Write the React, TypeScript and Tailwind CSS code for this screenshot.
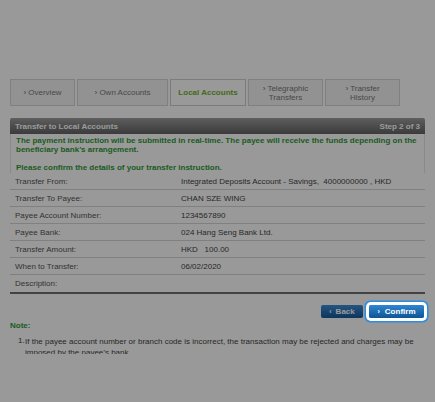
import React from 'react';

const tabs = [
  { label: 'Overview', w: 'w-[65px]' },
  { label: 'Own Accounts', w: 'w-[91px]' },
  { label: 'Local Accounts', w: 'w-[76px]', active: true },
  { label: 'Telegraphic\nTransfers', w: 'w-[75px]' },
  { label: 'Transfer\nHistory', w: 'w-[75px]' },
];

const rows: [string, string][] = [
  ['Transfer From:', 'Integrated Deposits Account - Savings,\u00a0\u00a04000000000\u00a0, HKD'],
  ['Transfer To Payee:', 'CHAN SZE WING'],
  ['Payee Account Number:', '1234567890'],
  ['Payee Bank:', '024 Hang Seng Bank Ltd.'],
  ['Transfer Amount:', 'HKD\u00a0\u00a0\u00a0100.00'],
  ['When to Transfer:', '06/02/2020'],
  ['Description:', ''],
];

export default function App() {
  return (
    <div className="relative h-[402px] w-[435px] overflow-hidden bg-white font-['Liberation_Sans',Arial,sans-serif] text-[8px] leading-[9px]">
      <div className="h-[354px] overflow-hidden px-[10px] pt-[79px]">
        {/* tabs */}
        <div className="flex gap-[2px]">
          {tabs.map((t) => (
            <div
              key={t.label}
              className={`${t.w} flex h-[27px] items-center justify-center border text-center ${t.active ? 'border-[#cfcfcf] bg-white font-bold text-[#74b02c]' : 'border-[#d6d6d6] bg-[#f3f3f3] text-[#7a7a7a]'}`}
            >
              {t.active ? (
                t.label
              ) : (
                <span className="whitespace-pre-line">
                  <span className="text-[#2f77b8]">›</span> {t.label}
                </span>
              )}
            </div>
          ))}
        </div>

        {/* header bar */}
        <div className="mt-[12px] flex h-[16px] items-center justify-between rounded-t-[2px] bg-gradient-to-b from-[#9d9d9d] to-[#636363] px-[5px] font-bold text-white">
          <span>Transfer to Local Accounts</span>
          <span>Step 2 of 3</span>
        </div>

        {/* message */}
        <div className="border-x border-[#e4e4e4] px-[5px] pt-[2px] font-bold text-[#2e9a34]">
          <p>The payment instruction will be submitted in real-time. The payee will receive the funds depending on the beneficiary bank’s arrangement.</p>
          <p className="mt-[9px] h-[10px]">Please confirm the details of your transfer instruction.</p>
        </div>

        {/* details */}
        <div className="border-b-2 border-[#6e6e6e]">
          {rows.map(([k, v], i) => (
            <div
              key={k}
              className={`flex h-[17px] items-center px-[5px] text-[#555555] ${i < rows.length - 1 ? 'border-b border-[#d6d6d6]' : ''}`}
            >
              <span className="w-[166px] shrink-0">{k}</span>
              <span className="text-[#444444]">{v}</span>
            </div>
          ))}
        </div>

        {/* buttons */}
        <div className="mt-[11px] flex justify-end gap-[6px] pr-[1px]">
          <button className="flex h-[13px] w-[42px] items-center justify-center rounded-[2px] bg-gradient-to-b from-[#3d8fd6] to-[#145a9c] font-bold text-white">
            <span className="mr-[4px] text-[7px]">‹</span>Back
          </button>
          <button className="relative z-20 flex h-[13px] w-[55px] items-center justify-center rounded-[2px] bg-gradient-to-b from-[#2f86d0] to-[#0f5596] font-bold text-white shadow-[0_0_0_3px_#ffffff,0_0_0_4.5px_#2d8de0]">
            <span className="mr-[5px] text-[7px]">›</span>Confirm
          </button>
        </div>

        {/* note */}
        <div className="mt-[3px]">
          <p className="font-bold text-[#2e9a34]">Note:</p>
          <div className="mt-[6px] flex pl-[8px] text-[#444444]">
            <span className="w-[7px] shrink-0">1.</span>
            <p className="leading-[11px]">If the payee account number or branch code is incorrect, the transaction may be rejected and charges may be imposed by the payee’s bank.</p>
          </div>
        </div>
      </div>

      {/* dim overlay */}
      <div className="absolute inset-0 z-10 bg-black/40" />
    </div>
  );
}
